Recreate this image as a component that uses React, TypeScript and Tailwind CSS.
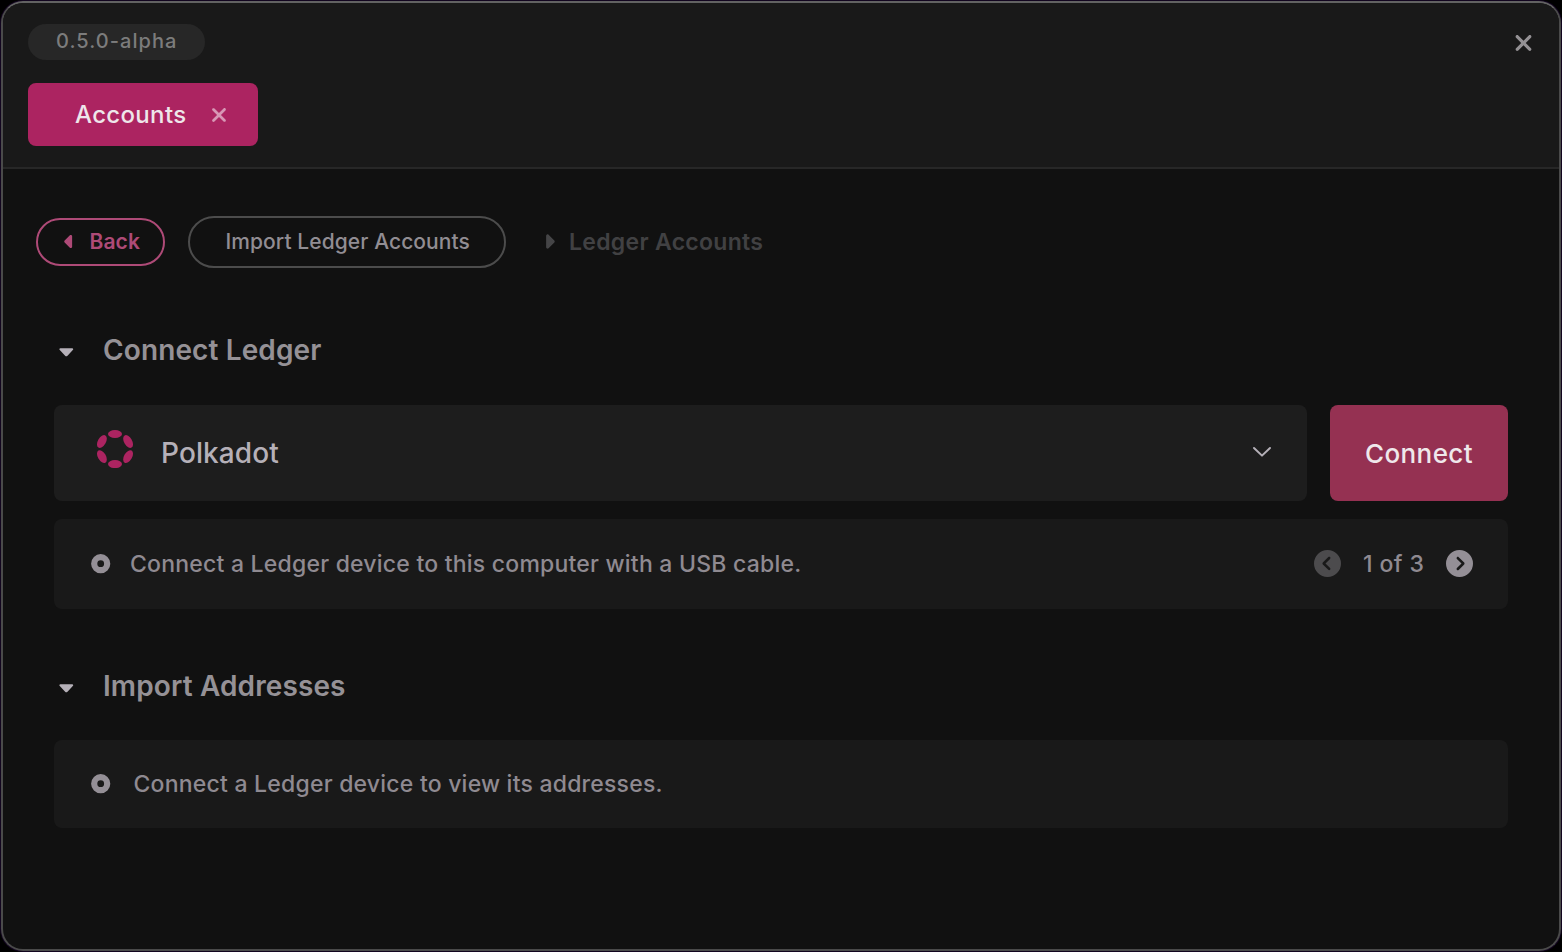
import type { ReactNode } from "react";
import { FaCaretLeft, FaCaretRight, FaCircleChevronLeft, FaCircleChevronRight, FaXmark } from "react-icons/fa6";

function PolkadotLogo() {
  return (
    <svg className="h-[38px] w-[38px] shrink-0" viewBox="0 0 38 38" fill="#ac2461">
      <ellipse cx="19" cy="4" rx="7" ry="4" />
      <ellipse cx="19" cy="34.1" rx="7" ry="4" />
      <ellipse cx="5.9" cy="11.5" rx="7" ry="4" transform="rotate(-60 5.9 11.5)" />
      <ellipse cx="32.1" cy="26.6" rx="7" ry="4" transform="rotate(-60 32.1 26.6)" />
      <ellipse cx="32.1" cy="11.5" rx="7" ry="4" transform="rotate(60 32.1 11.5)" />
      <ellipse cx="5.9" cy="26.6" rx="7" ry="4" transform="rotate(60 5.9 26.6)" />
    </svg>
  );
}

function RingDot() {
  return (
    <svg className="h-5 w-5 shrink-0" viewBox="0 0 20 20">
      <circle cx="9.7" cy="9.7" r="6.5" fill="none" stroke="#948f96" strokeWidth="6.2" />
    </svg>
  );
}

function SectionHeading({ children }: { children: ReactNode }) {
  return (
    <div className="flex h-9 items-center pl-[5px]">
      <svg className="mt-[5px] h-[9px] w-[15px] shrink-0" viewBox="0 0 15 9" fill="#b5b0b8">
        <path d="M1.4 0.2 H13.2 C14.3 0.2 14.6 1.3 13.8 2.1 L8.5 7.8 C7.8 8.5 6.8 8.5 6.1 7.8 L0.8 2.1 C0 1.3 0.3 0.2 1.4 0.2 Z" />
      </svg>
      <h2 className="ml-[29px] text-[28px] leading-9 font-semibold tracking-[0.12px] text-[#959196]">{children}</h2>
    </div>
  );
}

export default function App() {
  return (
    <div className="h-[952px] w-[1562px] bg-black p-px font-[Inter,sans-serif] whitespace-nowrap">
      <div className="flex h-[950px] w-[1560px] flex-col overflow-hidden rounded-[22px] border-2 border-[#4a4a4a] border-t-[#626262] bg-[#111111] shadow-[0_0_0_1px_#12051f]">
        <header className="h-[166px] shrink-0 border-b-2 border-[#272727] bg-[#191919] pt-[21px] pl-[25px]">
          <div className="flex justify-between pr-[26px]">
            <div className="flex h-9 w-[177px] items-center rounded-full bg-[#272727] pb-[2px] pl-7 text-[20px] font-medium tracking-[1.05px] text-[#7c7c7c]">
              0.5.0-alpha
            </div>
            <button className="flex h-9 items-center text-[#949194]">
              <FaXmark className="mt-px h-[26px] w-[19px]" />
            </button>
          </div>
          <div className="mt-[23px] flex h-[63px] w-[230px] items-center rounded-lg bg-[#ac2461] pl-[47px]">
            <span className="w-[111px] text-[24px] font-medium tracking-[0.33px] text-[#eee6ea]">Accounts</span>
            <FaXmark className="ml-[24px] h-[22px] w-[18px] text-[#d897b5]" />
          </div>
        </header>

        <main className="pt-[47px]">
          <nav className="flex h-[52px] items-center pl-[33px]">
            <button className="flex h-12 w-[129px] items-center rounded-full border-2 border-[#ae4a77] pl-[25px] text-[#ae4a77]">
              <FaCaretLeft className="mb-px h-[21px] w-[13px]" />
              <span className="ml-[13.5px] text-[21px] font-semibold tracking-[0.1px]">Back</span>
            </button>
            <div className="ml-[23px] flex h-[52px] w-[318px] items-center rounded-full border-2 border-[#4c4c4c] pl-[35.5px] text-[21px] font-medium tracking-[0.08px] text-[#918d93]">
              Import Ledger Accounts
            </div>
            <FaCaretRight className="mb-px ml-[36px] h-[23px] w-[14px] text-[#454547]" />
            <span className="ml-[13px] text-[23px] font-semibold tracking-[0.3px] text-[#414143]">Ledger Accounts</span>
          </nav>

          <section className="mt-[64px] px-[51px]">
            <SectionHeading>Connect Ledger</SectionHeading>
            <div className="mt-[37px] flex h-24 gap-[23px]">
              <button className="flex w-[1253px] items-center rounded-lg bg-[#1d1d1d] pr-[35px] pl-[42px]">
                <span className="mb-[8px]">
                  <PolkadotLogo />
                </span>
                <span className="ml-[27px] text-[28px] font-medium tracking-[0.1px] text-[#b5b0b8]">Polkadot</span>
                <svg className="ml-auto h-5 w-5" viewBox="0 0 20 20" fill="none" stroke="#b5b0b8" strokeWidth="2" strokeLinecap="round" strokeLinejoin="round">
                  <path d="M2 5 L10 12.6 L18 5" />
                </svg>
              </button>
              <button className="flex w-[178px] items-center justify-center rounded-lg bg-[#953152] text-[26px] font-medium tracking-[0.4px] text-[#efe8eb]">
                Connect
              </button>
            </div>
            <div className="mt-[18px] flex h-[90px] items-center rounded-lg bg-[#191919] pr-[35px] pl-[37px] text-[23px] font-medium tracking-[0.22px] text-[#8f8a91]">
              <RingDot />
              <span className="ml-[19px]">Connect a Ledger device to this computer with a USB cable.</span>
              <div className="ml-auto flex items-center">
                <FaCircleChevronLeft className="mb-px h-[27px] w-[27px] text-[#4c4b4d]" />
                <span className="ml-[22px] w-[61px] tracking-[0.4px]">1 of 3</span>
                <FaCircleChevronRight className="mb-px ml-[22px] h-[27px] w-[27px] text-[#948f96]" />
              </div>
            </div>
          </section>

          <section className="mt-[59px] px-[51px]">
            <SectionHeading>Import Addresses</SectionHeading>
            <div className="mt-[36px] flex h-[88px] items-center rounded-lg bg-[#191919] pl-[37px] text-[23px] font-medium tracking-[0.22px] text-[#8f8a91]">
              <RingDot />
              <span className="ml-[22.5px]">Connect a Ledger device to view its addresses.</span>
            </div>
          </section>
        </main>
      </div>
    </div>
  );
}
